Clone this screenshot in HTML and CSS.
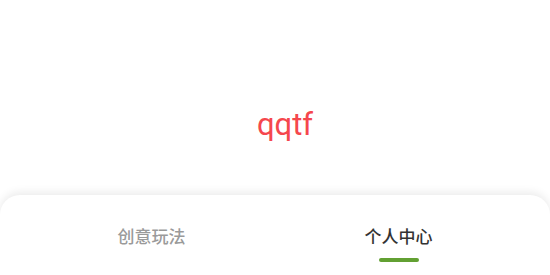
FILE: index.html
```html
<!DOCTYPE html>
<html lang="zh">
<head>
<meta charset="utf-8">
<link rel="stylesheet" href="styles.css">
</head>
<body>
<div class="page">
  <main class="content">
    <div class="title">qqtf</div>
  </main>
  <nav class="tabbar">
    <div class="tab">
      <span class="tab-label">创意玩法</span>
      <span class="tab-line"></span>
    </div>
    <div class="tab tab-active">
      <span class="tab-label">个人中心</span>
      <span class="tab-line"></span>
    </div>
  </nav>
</div>
</body>
</html>
```
FILE: styles.css
```css
html, body {
  margin: 0;
  padding: 0;
  background: #ffffff;
}
.page {
  width: 550px;
  height: 275px;
  display: flex;
  flex-direction: column;
  overflow: hidden;
  font-family: Roboto, "Noto Sans CJK SC", sans-serif;
}
.content {
  flex: 1;
  display: flex;
  justify-content: center;
  padding-top: 105px;
  padding-left: 20px;
}
.title {
  color: #f5474d;
  font-size: 31px;
  line-height: 40px;
  height: 40px;
}
.tabbar {
  height: 80px;
  flex: none;
  display: flex;
  padding: 0 28px;
  background: #ffffff;
  border-radius: 20px 20px 0 0;
  box-shadow: 0 -3px 8px rgba(0, 0, 0, 0.08);
}
.tab {
  flex: 1;
  display: flex;
  flex-direction: column;
  align-items: center;
  padding-top: 29px;
}
.tab-label {
  font-family: "Noto Sans CJK SC", sans-serif;
  font-size: 17px;
  line-height: 24px;
  color: #9a9a9a;
  font-weight: 500;
}
.tab-line {
  margin-top: 10px;
  width: 40px;
  height: 4px;
  border-radius: 2px;
  background: transparent;
}
.tab-active .tab-label {
  color: #333333;
}
.tab-active .tab-line {
  background: #62a032;
}
```
